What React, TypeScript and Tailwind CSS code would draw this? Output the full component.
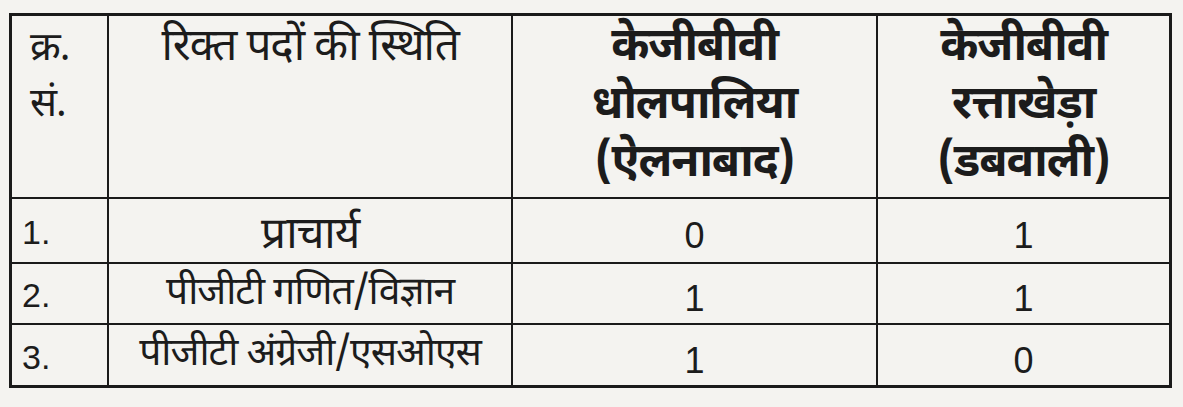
import React from "react";

const rows = [
  { no: "1.", post: "प्राचार्य", a: "0", b: "1", big: true, h: "h-[65px]" },
  { no: "2.", post: "पीजीटी गणित/विज्ञान", a: "1", b: "1", big: false, h: "h-[61px]" },
  { no: "3.", post: "पीजीटी अंग्रेजी/एसओएस", a: "1", b: "0", big: false, h: "h-[63px]" },
];

const font = { fontFamily: '"Noto Sans Devanagari", "Noto Sans", "Lohit Devanagari", "Liberation Sans", sans-serif' };
const num = { fontFamily: '"Liberation Sans", sans-serif' };

export default function App() {
  return (
    <div className="w-[1183px] h-[407px] bg-[#f4f3f0] pt-[13px] pl-[9px] text-[#1c1c1c]" style={font}>
      <table className="border-collapse border-[3px] border-[#1a1a1a] w-[1163px]">
        <colgroup>
          <col className="w-[98px]" />
          <col className="w-[405px]" />
          <col className="w-[366px]" />
          <col className="w-[294px]" />
        </colgroup>
        <thead>
          <tr className="h-[183px]">
            <th className="border-[2px] border-[#1a1a1a] align-top text-left pl-[18px] pt-[6px] font-normal text-[40px] leading-[56px] tracking-tight">
              <div>क्र.</div>
              <div>सं.</div>
            </th>
            <th className="border-[2px] border-[#1a1a1a] align-top pt-[4px] font-normal text-[44px] leading-[60px] tracking-tight">
              रिक्त पदों की स्थिति
            </th>
            <th className="border-[2px] border-[#1a1a1a] align-top pt-[4px] font-bold text-[46px] leading-[58px] tracking-tight">
              <div>केजीबीवी</div>
              <div>धोलपालिया</div>
              <div>(ऐलनाबाद)</div>
            </th>
            <th className="border-[2px] border-[#1a1a1a] align-top pt-[4px] font-bold text-[46px] leading-[58px] tracking-tight">
              <div>केजीबीवी</div>
              <div>रत्ताखेड़ा</div>
              <div>(डबवाली)</div>
            </th>
          </tr>
        </thead>
        <tbody>
          {rows.map((r) => (
            <tr key={r.no} className={r.h}>
              <td className="border-[2px] border-[#1a1a1a] pl-[10px] pt-[4px] text-[34px] leading-none" style={num}>
                {r.no}
              </td>
              <td
                className={
                  r.big
                    ? "border-[2px] border-[#1a1a1a] text-center text-[44px] leading-none pt-[16px] tracking-tight"
                    : "border-[2px] border-[#1a1a1a] text-center text-[39px] leading-none pt-[2px] tracking-tight"
                }
              >
                {r.post}
              </td>
              <td className="border-[2px] border-[#1a1a1a] text-center text-[36px] leading-none pt-[12px]" style={num}>
                {r.a}
              </td>
              <td className="border-[2px] border-[#1a1a1a] text-center text-[36px] leading-none pt-[12px]" style={num}>
                {r.b}
              </td>
            </tr>
          ))}
        </tbody>
      </table>
    </div>
  );
}
